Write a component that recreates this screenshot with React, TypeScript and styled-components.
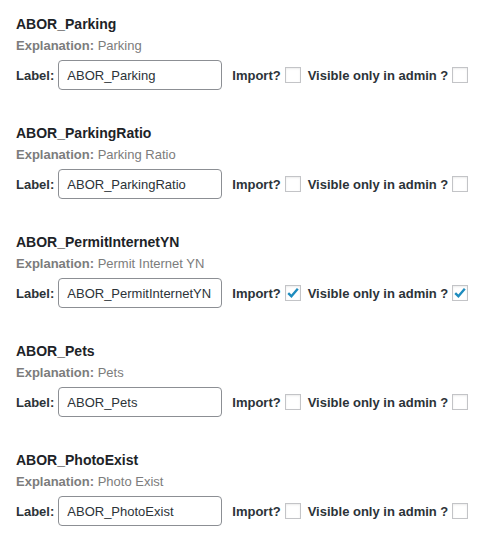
import React from "react";
import styled, { createGlobalStyle } from "styled-components";

const GlobalStyle = createGlobalStyle`
  html, body {
    margin: 0;
    padding: 0;
    background: #ffffff;
  }
  body {
    font-family: "Liberation Sans", Arial, sans-serif;
    color: #1d2327;
  }
`;

const Page = styled.div`
  padding: 14px 16px 0 16px;
  display: flex;
  flex-direction: column;
`;

const Field = styled.section`
  display: flex;
  flex-direction: column;
  margin-bottom: 33px;
`;

const Title = styled.h4`
  margin: 0 0 2px 0;
  font-size: 14px;
  line-height: 20px;
  font-weight: 700;
  color: #1d2327;
`;

const Explanation = styled.div`
  margin: 0 0 4px 0;
  font-size: 13px;
  line-height: 20px;
  color: #7c7c7c;
`;

const ExplanationKey = styled.strong`
  font-weight: 700;
  color: #7c7c7c;
`;

const Row = styled.div`
  display: flex;
  align-items: center;
  height: 30px;
`;

const RowLabel = styled.label<{ $gap: number }>`
  font-size: 13px;
  font-weight: 700;
  color: #2c3338;
  margin-right: ${(p) => p.$gap}px;
  white-space: nowrap;
`;

const TextInput = styled.input`
  box-sizing: border-box;
  width: 164px;
  height: 30px;
  margin: 0 10px 0 0;
  padding: 0 8px;
  border: 1px solid #8c8f94;
  border-radius: 4px;
  font-family: "Liberation Sans", Arial, sans-serif;
  font-size: 13px;
  color: #2c3338;
  background: #fff;
  outline: none;
`;

const Box = styled.span<{ $last?: boolean }>`
  box-sizing: border-box;
  width: 16px;
  height: 16px;
  border: 1px solid #c3c4c7;
  background: #fff;
  box-shadow: inset 0 1px 2px rgba(0, 0, 0, 0.08);
  display: flex;
  align-items: center;
  justify-content: center;
  margin-right: ${(p) => (p.$last ? 0 : 7)}px;
`;

const Check = () => (
  <svg width="14" height="14" viewBox="0 0 14 14">
    <path
      d="M2.2 7.2 L5.4 10.2 L11.8 2.8"
      fill="none"
      stroke="#1e8cbe"
      strokeWidth="2.4"
      strokeLinecap="butt"
      strokeLinejoin="miter"
    />
  </svg>
);

const Checkbox = ({ checked, last }: { checked: boolean; last?: boolean }) => (
  <Box $last={last}>{checked ? <Check /> : null}</Box>
);

type FieldData = {
  name: string;
  explanation: string;
  checked: boolean;
};

const fields: FieldData[] = [
  { name: "ABOR_Parking", explanation: "Parking", checked: false },
  { name: "ABOR_ParkingRatio", explanation: "Parking Ratio", checked: false },
  { name: "ABOR_PermitInternetYN", explanation: "Permit Internet YN", checked: true },
  { name: "ABOR_Pets", explanation: "Pets", checked: false },
  { name: "ABOR_PhotoExist", explanation: "Photo Exist", checked: false },
];

export default function App() {
  return (
    <>
      <GlobalStyle />
      <Page>
        {fields.map((f) => (
          <Field key={f.name}>
            <Title>{f.name}</Title>
            <Explanation>
              <ExplanationKey>Explanation:</ExplanationKey> {f.explanation}
            </Explanation>
            <Row>
              <RowLabel $gap={4}>Label:</RowLabel>
              <TextInput defaultValue={f.name} readOnly />
              <RowLabel $gap={4}>Import?</RowLabel>
              <Checkbox checked={f.checked} />
              <RowLabel $gap={4}>Visible only in admin ?</RowLabel>
              <Checkbox checked={f.checked} last />
            </Row>
          </Field>
        ))}
      </Page>
    </>
  );
}
